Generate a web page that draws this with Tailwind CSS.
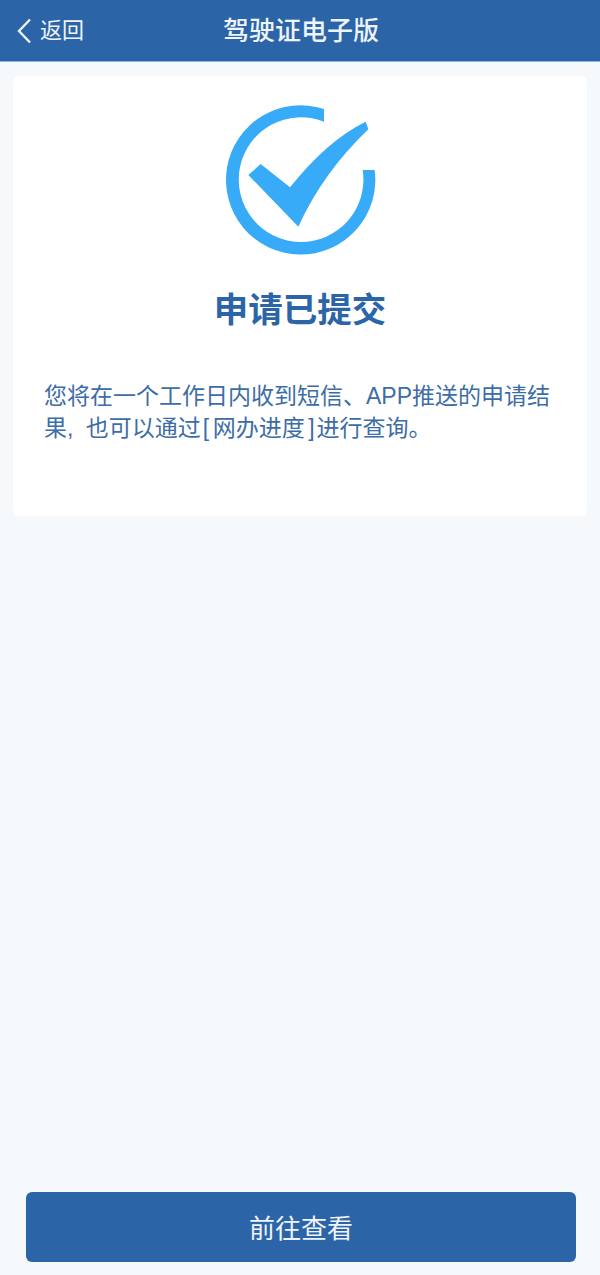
<!DOCTYPE html>
<html lang="zh-CN">
<head>
    <meta charset="UTF-8">
    <meta name="viewport" content="width=device-width, initial-scale=1.0">
    <title>驾驶证电子版</title>
    <script src="https://cdn.jsdelivr.net/npm/@tailwindcss/browser@4"></script>
</head>
<body class="bg-[#f5f9fb] font-['Liberation_Sans','Noto_Sans_CJK_SC',sans-serif]">
    <div class="flex flex-col h-[1275px] overflow-hidden">
        <!-- Thanh tiêu đề -->
        <header class="relative flex items-center justify-center h-[62px] shrink-0 bg-[#2b64a7] border-b border-[#8db8e6] text-[#eef4fa]">
            <div class="absolute left-[17px] top-0 h-[61px] flex items-center gap-[9px]">
                <svg class="w-[14px] h-[26px]" viewBox="0 0 14 26" fill="none" stroke="currentColor" stroke-width="2.4">
                    <path d="M13 1.5 2 13l11 11.5"/>
                </svg>
                <span class="text-[22px] leading-none">返回</span>
            </div>
            <h1 class="text-[26px] leading-none font-medium ml-[2px]">驾驶证电子版</h1>
        </header>

        <main class="flex flex-col grow px-[13px] pt-[14px] pb-[13px]">
            <section class="bg-white rounded-md h-[440px] px-[31px] pt-[24px]">
                <svg class="block ml-[177px] w-[160px] h-[160px]" viewBox="0 0 480 480">
                    <path fill="#38abf8" d="M309 27A224 224 0 1 0 461 210L425 210A187 187 0 1 1 309 65Z"/>
                    <path fill="#38abf8" d="M82 225 119 192 207 262Q318 122 434 65L442 88Q306 218 232 380Z"/>
                </svg>
                <h2 class="mt-[30px] text-center text-[34.5px] leading-[40px] font-semibold text-[#2b64a7]">申请已提交</h2>
                <p class="mt-[50px] text-[23px] leading-[32px] text-[#3d6da6]">您将在一个工作日内收到短信、APP推送的申请结<br>果<span class="mr-[6px]">,</span> 也可以通过<span class="mx-[2px]">[<span class="mx-[3.5px]">网办进度</span>]</span>进行查询。</p>
            </section>
            <button class="mt-auto ml-[13px] mr-[11px] pt-[4px] h-[70px] shrink-0 rounded-md bg-[#2b64a7] text-[26px] text-[#eef4fa]">前往查看</button>
        </main>
    </div>
</body>
</html>
